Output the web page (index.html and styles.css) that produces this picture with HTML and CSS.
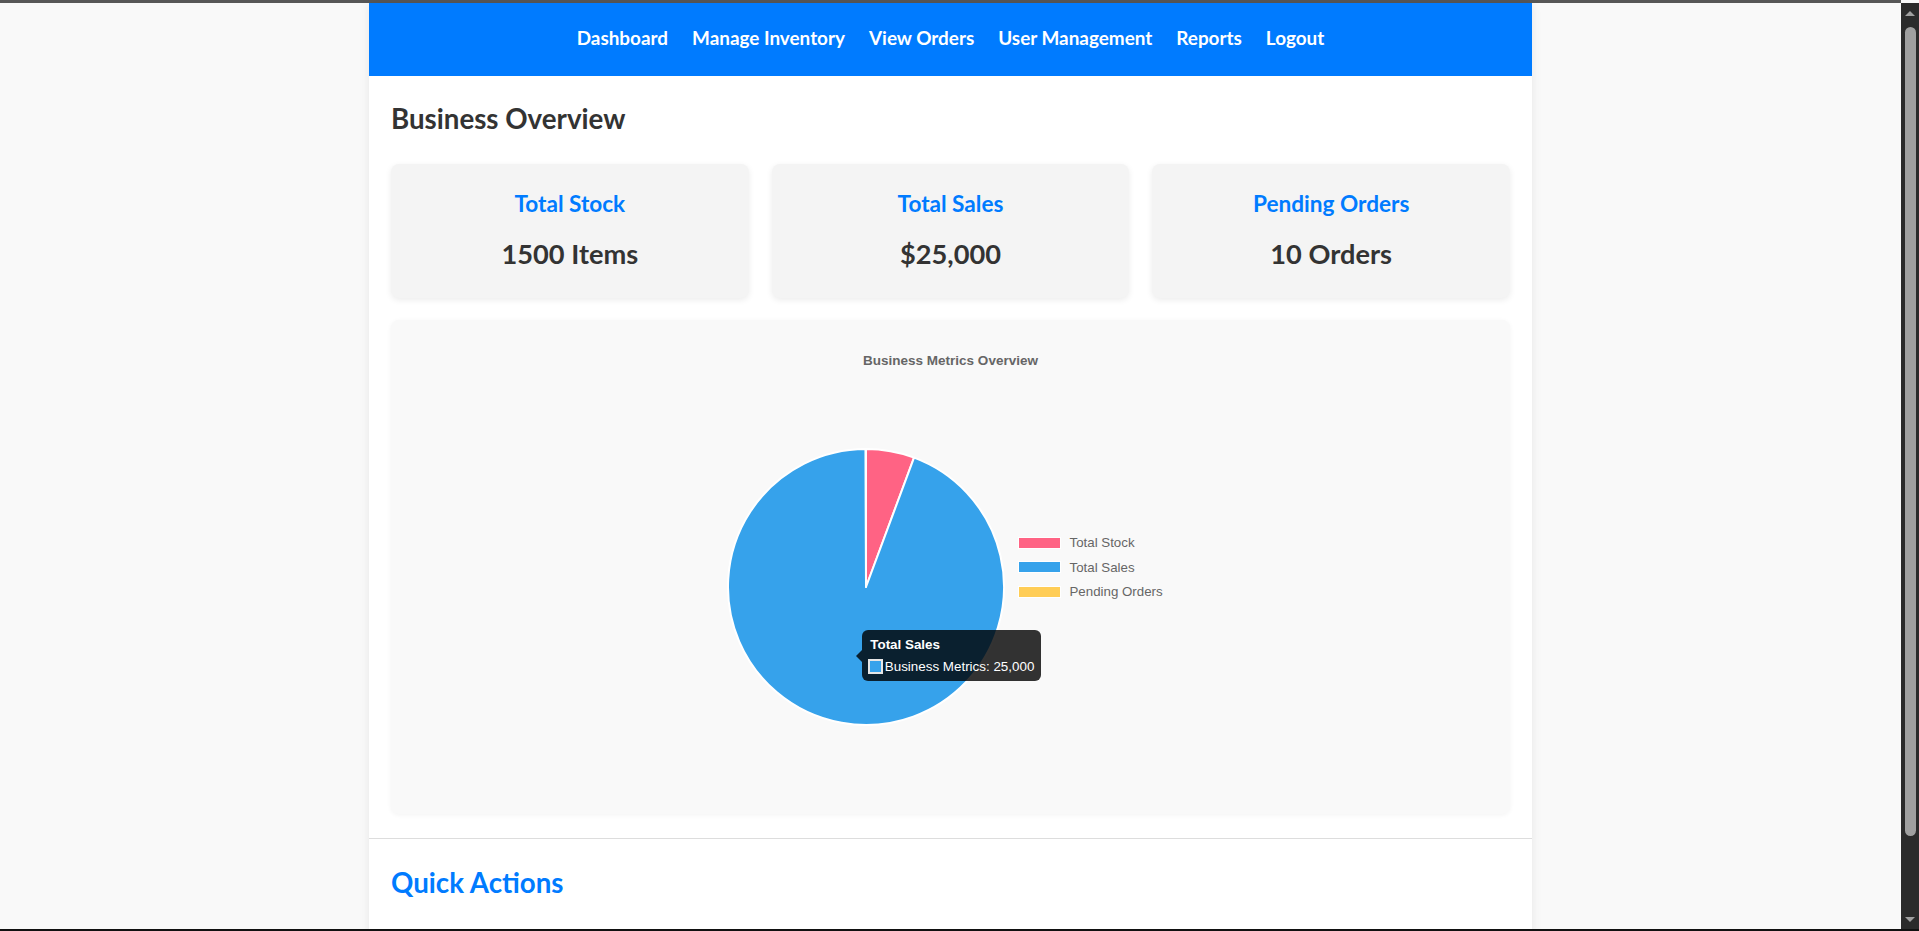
FILE: index.html
```html
<!DOCTYPE html>
<html lang="en">
<head>
<meta charset="utf-8">
<title>Business Overview</title>
<link rel="stylesheet" href="styles.css">
</head>
<body>
<div class="frame-top"></div>
<div class="container">
  <nav class="navbar">
    <a href="#">Dashboard</a>
    <a href="#">Manage Inventory</a>
    <a href="#">View Orders</a>
    <a href="#">User Management</a>
    <a href="#">Reports</a>
    <a href="#">Logout</a>
  </nav>
  <main class="content">
    <section class="overview">
      <h2 class="section-title">Business Overview</h2>
      <div class="cards">
        <div class="card"><h3>Total Stock</h3><p>1500 Items</p></div>
        <div class="card"><h3>Total Sales</h3><p>$25,000</p></div>
        <div class="card"><h3>Pending Orders</h3><p>10 Orders</p></div>
      </div>
      <div class="chart-box">
        <div class="chart-canvas">
          <div class="chart-title">Business Metrics Overview</div>
          <svg class="pie" width="282" height="282" viewBox="-141 -141 282 282">
            <path d="M0 0 L0 -138 A138 138 0 0 1 48.04 -129.37 Z" fill="#ff6384" stroke="#fff" stroke-width="2" stroke-linejoin="round"/>
            <path d="M0 0 L48.04 -129.37 A138 138 0 1 1 -0.33 -138 Z" fill="#36a2eb" stroke="#fff" stroke-width="2" stroke-linejoin="round"/>
            <path d="M0 0 L-0.33 -138 A138 138 0 0 1 0 -138 Z" fill="#ffcd56" stroke="#fff" stroke-width="2" stroke-linejoin="round"/>
          </svg>
          <ul class="legend">
            <li><span class="swatch swatch-stock"></span>Total Stock</li>
            <li><span class="swatch swatch-sales"></span>Total Sales</li>
            <li><span class="swatch swatch-pending"></span>Pending Orders</li>
          </ul>
          <div class="tooltip">
            <div class="tooltip-title">Total Sales</div>
            <div class="tooltip-body"><span class="tooltip-box"></span>Business Metrics: 25,000</div>
          </div>
        </div>
      </div>
    </section>
    <section class="quick-actions">
      <h2 class="section-title accent">Quick Actions</h2>
    </section>
  </main>
</div>
<div class="scrollbar" aria-hidden="true">
  <span class="scroll-arrow up"></span>
  <span class="scroll-thumb"></span>
  <span class="scroll-arrow down"></span>
</div>
<div class="frame-bottom"></div>
</body>
</html>
```
FILE: styles.css
```css
* { box-sizing: border-box; }

html, body {
  margin: 0;
  padding: 0;
}

body {
  background: #f9f9f9;
  font-family: Lato, "Noto Sans", sans-serif;
  color: #333;
  padding-right: 18px;
}

.frame-top {
  height: 3px;
  background: #575757;
}

.frame-bottom {
  position: fixed;
  left: 0;
  right: 0;
  bottom: 0;
  height: 2px;
  background: #111;
}

/* fake window scrollbar (overlay on the right edge) */
.scrollbar {
  position: fixed;
  top: 3px;
  right: 0;
  bottom: 0;
  width: 18px;
  background: #2b2b2b;
}

.scroll-thumb {
  position: absolute;
  left: 4px;
  top: 24px;
  width: 11px;
  height: 809px;
  border-radius: 6px;
  background: #a0a0a0;
}

.scroll-arrow {
  position: absolute;
  left: 4px;
  width: 0;
  height: 0;
  border-left: 5.5px solid transparent;
  border-right: 5.5px solid transparent;
}

.scroll-arrow.up {
  top: 8px;
  border-bottom: 5.5px solid #a0a0a0;
}

.scroll-arrow.down {
  bottom: 9px;
  border-top: 5.5px solid #a0a0a0;
}

.container {
  width: 1163px;
  margin: 0 auto;
  background: #fff;
  box-shadow: 0 0 10px rgba(0, 0, 0, 0.08);
  min-height: 1028px;
}

.navbar {
  height: 73px;
  padding-bottom: 2px;
  background: #007bff;
  display: flex;
  justify-content: center;
  align-items: center;
  gap: 24px;
}

.navbar a {
  color: #fff;
  text-decoration: none;
  font-weight: 700;
  font-size: 18.9px;
  line-height: 1.2;
}

.content {
  padding: 0 22px;
}

.section-title {
  margin: 0;
  font-size: 27.7px;
  line-height: 34px;
  font-weight: 700;
  color: #333;
}

.section-title.accent { color: #007bff; }

.overview {
  padding-top: 26.2px;
}

.cards {
  display: grid;
  grid-template-columns: repeat(3, 1fr);
  gap: 23px;
  margin-top: 27.8px;
}

.card {
  height: 134px;
  background: #f4f4f4;
  border-radius: 8px;
  box-shadow: 0 2px 6px rgba(0, 0, 0, 0.08);
  text-align: center;
  padding-top: 26px;
}

.card h3 {
  margin: 0;
  font-size: 22.6px;
  line-height: 28px;
  color: #007bff;
  font-weight: 700;
}

.card p {
  margin: 18.8px 0 0;
  font-size: 27.2px;
  line-height: 34px;
  font-weight: 700;
  color: #333;
}

.chart-box {
  margin: 22px 0 24px;
  height: 494px;
  background: #f9f9f9;
  border-radius: 8px;
  box-shadow: 0 1px 5px rgba(0, 0, 0, 0.05);
}

.chart-canvas {
  position: relative;
  height: 100%;
  font-family: "Liberation Sans", Arial, sans-serif;
}

.chart-title {
  position: absolute;
  left: 0;
  right: 0;
  top: 33.1px;
  text-align: center;
  font-weight: 700;
  font-size: 13.5px;
  line-height: 16.08px;
  color: #666;
}

.pie {
  position: absolute;
  left: 333.5px;
  top: 126px;
  display: block;
}

.legend {
  position: absolute;
  left: 627px;
  top: 210.4px;
  margin: 0;
  padding: 0;
  list-style: none;
  font-size: 13.3px;
  color: #666;
}

.legend li {
  height: 24.65px;
  display: flex;
  align-items: center;
}

.swatch {
  width: 43px;
  height: 12px;
  margin-right: 8.5px;
  border: 1px solid #fff;
}

.swatch-stock { background: #ff6384; }
.swatch-sales { background: #36a2eb; }
.swatch-pending { background: #ffcd56; }

.tooltip {
  position: absolute;
  left: 470.7px;
  top: 310px;
  padding: 6.6px;
  background: rgba(0, 0, 0, 0.8);
  border-radius: 6px;
  color: #fff;
  font-size: 13.4px;
  line-height: 15.84px;
  white-space: nowrap;
}

.tooltip::before {
  content: "";
  position: absolute;
  left: -6px;
  top: 50%;
  margin-top: -6px;
  border-style: solid;
  border-width: 6px 6px 6px 0;
  border-color: transparent rgba(0, 0, 0, 0.8) transparent transparent;
}

.tooltip-title {
  font-weight: 700;
  margin-bottom: 6.6px;
  padding-left: 2px;
}

.tooltip-body {
  display: flex;
  align-items: center;
}

.tooltip-box {
  width: 15px;
  height: 15px;
  margin-right: 1.5px;
  background: #36a2eb;
  border: 2px solid #e6e6e6;
}

.quick-actions {
  border-top: 1px solid #ddd;
  margin: 0 -22px;
  padding: 26.7px 22px 0;
}
```
